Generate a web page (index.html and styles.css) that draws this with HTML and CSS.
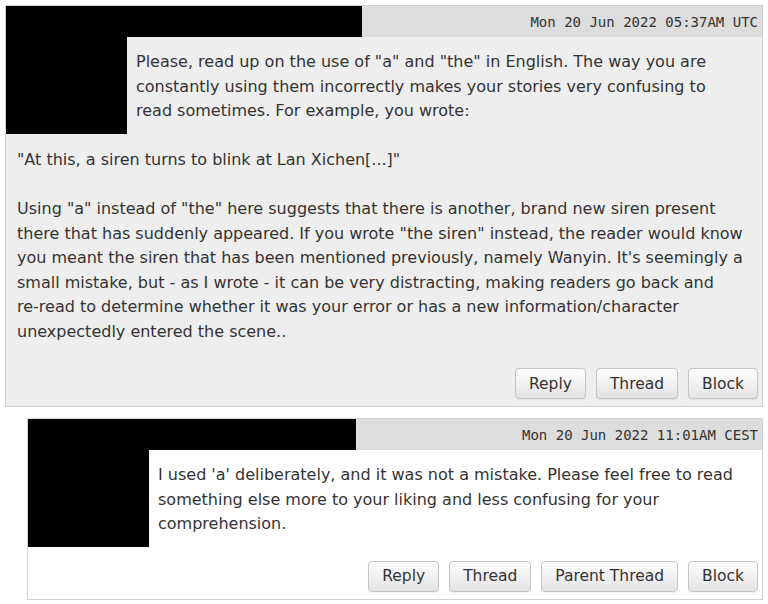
FILE: index.html
```html
<!DOCTYPE html>
<html lang="en">
<head>
<meta charset="utf-8">
<title>Messages</title>
<link rel="stylesheet" href="styles.css">
</head>
<body>
<div class="feed">
  <article class="post post-main">
    <header class="post-head">
      <span class="redact name name-main"></span>
      <time class="stamp">Mon 20 Jun 2022 05:37AM UTC</time>
    </header>
    <div class="post-body">
      <div class="redact avatar"></div>
      <p class="post-text">Please, read up on the use of "a" and "the" in English. The way you are constantly using them incorrectly makes your stories very confusing to read sometimes. For example, you wrote:<br><br>"At this, a siren turns to blink at Lan Xichen[...]"<br><br>Using "a" instead of "the" here suggests that there is another, brand new siren present there that has suddenly appeared. If you wrote "the siren" instead, the reader would know you meant the siren that has been mentioned previously, namely Wanyin. It's seemingly a small mistake, but - as I wrote - it can be very distracting, making readers go back and re&#8209;read to determine whether it was your error or has a new information/character unexpectedly entered the scene..</p>
    </div>
    <div class="actions">
      <button class="btn">Reply</button>
      <button class="btn">Thread</button>
      <button class="btn">Block</button>
    </div>
  </article>

  <article class="post post-reply">
    <header class="post-head">
      <span class="redact name name-reply"></span>
      <time class="stamp">Mon 20 Jun 2022 11:01AM CEST</time>
    </header>
    <div class="post-body">
      <div class="redact avatar"></div>
      <p class="post-text">I used 'a' deliberately, and it was not a mistake. Please feel free to read something else more to your liking and less confusing for your comprehension.</p>
    </div>
    <div class="actions">
      <button class="btn">Reply</button>
      <button class="btn">Thread</button>
      <button class="btn">Parent Thread</button>
      <button class="btn">Block</button>
    </div>
  </article>
</div>
</body>
</html>
```
FILE: styles.css
```css
html, body {
  margin: 0;
  padding: 0;
  background: #ffffff;
}

body {
  font-family: "DejaVu Sans", Verdana, sans-serif;
  color: #333333;
}

.feed {
  padding: 5px 5px 0 5px;
  display: flex;
  flex-direction: column;
  gap: 11px;
}

.post {
  border: 1px solid #d2d2d2;
  background: #eeeeee;
}

.post-reply {
  margin-left: 22px;
  background: #ffffff;
}

.post-head {
  height: 31px;
  background: #dddddd;
  display: flex;
  align-items: center;
  justify-content: space-between;
}

.redact {
  background: #000000;
}

.name {
  align-self: stretch;
}

.name-main {
  width: 356px;
}

.name-reply {
  width: 328px;
}

.stamp {
  font-family: "DejaVu Sans Mono", "Liberation Mono", monospace;
  font-size: 14px;
  padding-right: 4px;
  color: #333333;
}

.post-body {
  display: flow-root;
  padding: 13px 15.5px 0 11px;
}

.avatar {
  float: left;
  width: 121px;
  height: 128px;
  margin: -44px 9px 0 -11px;
}

.post-text {
  margin: 0 0 24px 0;
  font-size: 16px;
  line-height: 24.5px;
}

.actions {
  display: flex;
  justify-content: flex-end;
  gap: 10px;
  padding: 0 4px 7px 0;
}

.btn {
  height: 31px;
  padding: 0 13px;
  font-family: "DejaVu Sans", Verdana, sans-serif;
  font-size: 15.5px;
  color: #333333;
  border: 1px solid #c4c4c4;
  border-radius: 4px;
  background: linear-gradient(#fefefe, #e3e3e3);
  box-shadow: 0 1px 1px rgba(0, 0, 0, 0.06);
}
```
